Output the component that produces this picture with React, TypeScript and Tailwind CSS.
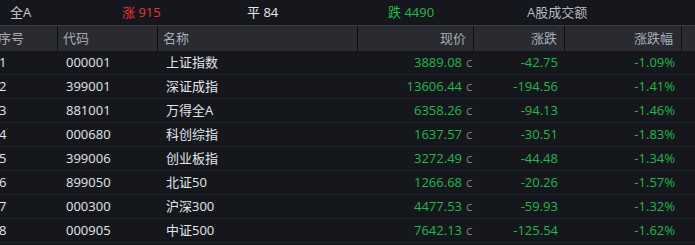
import React from 'react';

interface Row {
  code: string;
  name: string;
  price: string;
  change: string;
  pct: string;
}

const rows: Row[] = [
  { code: '000001', name: '上证指数', price: '3889.08', change: '-42.75', pct: '-1.09%' },
  { code: '399001', name: '深证成指', price: '13606.44', change: '-194.56', pct: '-1.41%' },
  { code: '881001', name: '万得全A', price: '6358.26', change: '-94.13', pct: '-1.46%' },
  { code: '000680', name: '科创综指', price: '1637.57', change: '-30.51', pct: '-1.83%' },
  { code: '399006', name: '创业板指', price: '3272.49', change: '-44.48', pct: '-1.34%' },
  { code: '899050', name: '北证50', price: '1266.68', change: '-20.26', pct: '-1.57%' },
  { code: '000300', name: '沪深300', price: '4477.53', change: '-59.93', pct: '-1.32%' },
  { code: '000905', name: '中证500', price: '7642.13', change: '-125.54', pct: '-1.62%' },
];

const font = { fontFamily: '"Open Sans", "Noto Sans CJK SC", sans-serif' };

export default function App() {
  return (
    <div className="w-[695px] h-[245px] overflow-hidden bg-[#15171c] text-[13px]" style={font}>
      {/* summary bar */}
      <div className="flex items-center h-[26px] border-b border-[#3a3b41] text-[#c9ccd3]">
        <div className="w-[122px] pl-[10px]">全A</div>
        <div className="w-[125px] text-[#e8333a]">涨 915</div>
        <div className="w-[141px] text-[#e6e8ec]">平 84</div>
        <div className="w-[139px] text-[#25b84c]">跌 4490</div>
        <div className="text-[#b7bac2]">A股成交额</div>
      </div>

      {/* header */}
      <div className="flex h-[25px] bg-[#2a2b31] text-[#a9adb5]">
        <div className="w-[60px] flex items-center -ml-[2px] border-r border-[#0c0d10]">序号</div>
        <div className="w-[100px] flex items-center pl-[5px] border-r border-[#0c0d10]">代码</div>
        <div className="w-[200px] flex items-center pl-[5px] border-r border-[#0c0d10]">名称</div>
        <div className="w-[116px] flex items-center justify-end pr-[7px] border-r border-[#0c0d10]">现价</div>
        <div className="w-[91px] flex items-center justify-end pr-[7px] border-r border-[#0c0d10]">涨跌</div>
        <div className="w-[117px] flex items-center justify-end pr-[8px] border-r border-[#0c0d10]">涨跌幅</div>
        <div className="flex-1" />
      </div>

      {/* rows */}
      {rows.map((row, i) => (
        <div key={row.code} className="flex h-[24px] border-b border-[#23262c] items-center">
          <div className="w-[60px] -ml-[1px] text-[#e3e6ec]">{i + 1}</div>
          <div className="w-[100px] pl-[7px] text-[#e3e6ec]">{row.code}</div>
          <div className="w-[200px] pl-[7px] text-[#e3e6ec]">{row.name}</div>
          <div className="w-[116px] flex items-baseline justify-end pr-[3px]">
            <span className="text-[#22b84a]">{row.price}</span>
            <span className="ml-[4px] w-[6px] text-[#7d7f84]">c</span>
          </div>
          <div className="w-[91px] text-right pr-[8px] text-[#22b84a]">{row.change}</div>
          <div className="w-[117px] text-right pr-[8px] text-[#22b84a]">{row.pct}</div>
        </div>
      ))}
    </div>
  );
}
